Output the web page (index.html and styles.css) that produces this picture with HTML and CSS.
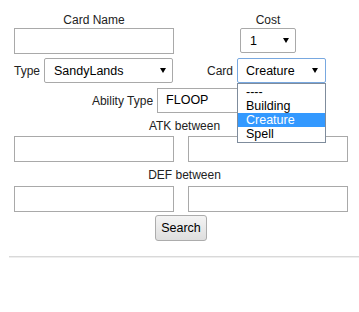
FILE: index.html
```html
<!DOCTYPE html>
<html>
<head>
<meta charset="utf-8">
<link rel="stylesheet" href="styles.css">
</head>
<body>
<form class="search">
  <div class="grid">
    <div class="cell">
      <div class="label">Card Name</div>
      <div class="field field-wide"></div>
    </div>
    <div class="cell">
      <div class="label">Cost</div>
      <div class="select select-cost"><span>1</span><svg class="arrow" width="6" height="5" viewBox="0 0 6 5"><path d="M0 0H6L3 5Z" fill="#000"/></svg></div>
    </div>
    <div class="inline inline-type">
      <span class="inline-label">Type</span>
      <div class="select select-type"><span>SandyLands</span><svg class="arrow" width="6" height="5" viewBox="0 0 6 5"><path d="M0 0H6L3 5Z" fill="#000"/></svg></div>
    </div>
    <div class="inline inline-card">
      <span class="inline-label">Card</span>
      <div class="select-wrap">
        <div class="select select-card is-focused"><span>Creature</span><svg class="arrow" width="6" height="5" viewBox="0 0 6 5"><path d="M0 0H6L3 5Z" fill="#000"/></svg></div>
        <ul class="dropdown">
          <li>----</li>
          <li>Building</li>
          <li class="is-active">Creature</li>
          <li>Spell</li>
        </ul>
      </div>
    </div>
    <div class="inline inline-ability span">
      <span class="inline-label">Ability Type</span>
      <div class="field field-ability">FLOOP</div>
    </div>
    <div class="label label-range span">ATK between</div>
    <div class="field field-wide field-range"></div>
    <div class="field field-wide field-range"></div>
    <div class="label label-range span">DEF between</div>
    <div class="field field-wide field-range2"></div>
    <div class="field field-wide field-range2"></div>
    <div class="actions span">
      <button type="button" class="button">Search</button>
    </div>
  </div>
</form>
<div class="rule"></div>
</body>
</html>
```

FILE: styles.css
```css
html, body {
  margin: 0;
  padding: 0;
  background: #fff;
}
body {
  font-family: "Liberation Sans", Arial, sans-serif;
  font-size: 12px;
  color: #222;
  overflow: hidden;
}
.search {
  padding-top: 13px;
  padding-left: 14px;
}
.grid {
  display: grid;
  grid-template-columns: 160px 160px;
  column-gap: 14px;
  width: 334px;
}
.span {
  grid-column: 1 / 3;
}
.cell {
  display: flex;
  flex-direction: column;
  align-items: center;
}
.label {
  line-height: 15px;
  height: 15px;
  text-align: center;
}
.field {
  box-sizing: border-box;
  height: 26px;
  border: 1px solid #a9a9a9;
  background: #fff;
  font-size: 12.5px;
  color: #000;
  line-height: 24px;
  padding-left: 9px;
}
.field-wide {
  width: 160px;
}
.select {
  box-sizing: border-box;
  height: 25px;
  border: 1px solid #a9a9a9;
  border-radius: 2px;
  background: #fff;
  font-size: 12.5px;
  color: #000;
  display: flex;
  align-items: center;
  justify-content: space-between;
  padding: 0 6px 0 9px;
}
.arrow {
  display: block;
}
.select-cost {
  width: 56px;
}
.select-type {
  width: 130px;
}
.select-card {
  width: 89px;
  padding-right: 7px;
  padding-left: 8px;
}
.select.is-focused {
  border-color: #78a8e0;
}
.inline {
  display: flex;
  align-items: center;
  margin-top: 4px;
}
.inline-label {
  margin-right: 4px;
}
.inline-type {
  justify-content: flex-end;
  margin-right: 1px;
}
.inline-card {
  justify-content: flex-start;
  padding-left: 19px;
}
.inline-ability {
  justify-content: center;
  margin-top: 5px;
  position: relative;
  z-index: 0;
}
.field-ability {
  width: 113px;
  height: 25px;
  line-height: 23px;
  padding-left: 8px;
}
.select-wrap {
  position: relative;
  z-index: 2;
}
.dropdown {
  position: absolute;
  left: 0;
  top: 25px;
  box-sizing: border-box;
  width: 89px;
  margin: 0;
  padding: 1px 0 1px;
  list-style: none;
  border: 1px solid #7f8c9c;
  background: #fff;
  font-size: 12.5px;
  color: #000;
}
.dropdown li {
  height: 14px;
  line-height: 14px;
  padding-left: 8px;
}
.dropdown li.is-active {
  background: #3399ff;
  color: #fff;
}
.label-range {
  margin-top: 6px;
  padding-left: 7px;
}
.field-range {
  margin-top: 2px;
}
.field-range2 {
  margin-top: 3px;
}
.actions {
  display: flex;
  justify-content: center;
  margin-top: 3px;
}
.button {
  box-sizing: border-box;
  width: 52px;
  height: 26px;
  margin: 0;
  padding: 0;
  border: 1px solid #acacac;
  border-radius: 3px;
  background: linear-gradient(#f4f4f4, #dedede);
  font-family: "Liberation Sans", Arial, sans-serif;
  font-size: 12.5px;
  color: #000;
}
.rule {
  margin: 15px 0 0 9px;
  height: 0;
  border-top: 1px solid #d9d9d9;
  border-bottom: 1px solid #eeeeee;
}
```
